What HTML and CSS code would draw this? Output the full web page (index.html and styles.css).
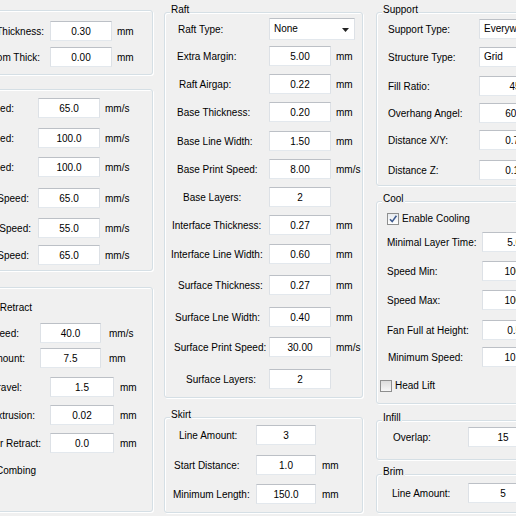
FILE: index.html
```html
<!DOCTYPE html>
<html lang="en">
<head>
    <meta charset="UTF-8">
    <meta name="viewport" content="width=device-width, initial-scale=1.0">
    <title>Expert Settings</title>
    <link rel="stylesheet" href="styles.css">
</head>
<body>
    <div class="dialog">
        <!-- Left column: quality, speed, retraction -->
        <div class="col col-left">
            <div class="group g-quality">
                <div class="rows">
                    <div class="row"><label class="lbl pr-6">Layer Thickness:</label><input class="field" value="0.30"><span class="unit">mm</span></div>
                    <div class="row"><label class="lbl pr-10">Bottom Thick:</label><input class="field" value="0.00"><span class="unit">mm</span></div>
                </div>
            </div>

            <div class="group g-speed">
                <div class="rows">
                    <div class="row"><label class="lbl pr-24">Print Speed:</label><input class="field" value="65.0"><span class="unit">mm/s</span></div>
                    <div class="row"><label class="lbl pr-24">Travel Speed:</label><input class="field" value="100.0"><span class="unit">mm/s</span></div>
                    <div class="row"><label class="lbl pr-24">Infill Speed:</label><input class="field" value="100.0"><span class="unit">mm/s</span></div>
                    <div class="row"><label class="lbl pr-9">Top/Bottom Speed:</label><input class="field" value="65.0"><span class="unit">mm/s</span></div>
                    <div class="row"><label class="lbl pr-7">Outer Shell Speed:</label><input class="field" value="55.0"><span class="unit">mm/s</span></div>
                    <div class="row"><label class="lbl pr-9">Inner Shell Speed:</label><input class="field" value="65.0"><span class="unit">mm/s</span></div>
                </div>
            </div>

            <div class="group g-retract">
                <div class="rows">
                    <div class="row check-row"><label class="lbl pr-8"><span class="check on"></span>Enable Retract</label></div>
                    <div class="row"><label class="lbl pr-21">Retract Speed:</label><input class="field" value="40.0"><span class="unit">mm/s</span></div>
                    <div class="row"><label class="lbl pr-15">Retract Amount:</label><input class="field" value="7.5"><span class="unit">mm</span></div>
                    <div class="row wide"><label class="lbl pr-28">Min Travel:</label><input class="field" value="1.5"><span class="unit">mm</span></div>
                    <div class="row wide"><label class="lbl pr-15">Min Extrusion:</label><input class="field" value="0.02"><span class="unit">mm</span></div>
                    <div class="row wide"><label class="lbl pr-9">Z Hop after Retract:</label><input class="field" value="0.0"><span class="unit">mm</span></div>
                    <div class="row wide check-row"><label class="lbl pr-14"><span class="check on"></span>Enable Combing</label></div>
                </div>
            </div>
        </div>

        <!-- Middle column: raft and skirt -->
        <div class="col col-mid">
            <div class="group g-raft">
                <span class="group-title">Raft</span>
                <div class="rows">
                    <div class="row combo-row"><label class="lbl pl-13">Raft Type:</label>
                        <div class="combo">None
                            <svg class="arrow" width="7" height="4" viewBox="0 0 7 4"><path d="M0 0H7L3.5 4Z" fill="#222"/></svg>
                        </div>
                    </div>
                    <div class="row"><label class="lbl pl-12">Extra Margin:</label><input class="field" value="5.00"><span class="unit">mm</span></div>
                    <div class="row"><label class="lbl pl-14">Raft Airgap:</label><input class="field" value="0.22"><span class="unit">mm</span></div>
                    <div class="row"><label class="lbl pl-12">Base Thickness:</label><input class="field" value="0.20"><span class="unit">mm</span></div>
                    <div class="row"><label class="lbl pl-12">Base Line Width:</label><input class="field" value="1.50"><span class="unit">mm</span></div>
                    <div class="row"><label class="lbl pl-12">Base Print Speed:</label><input class="field" value="8.00"><span class="unit">mm/s</span></div>
                    <div class="row"><label class="lbl pl-18">Base Layers:</label><input class="field" value="2"></div>
                    <div class="row"><label class="lbl pl-7">Interface Thickness:</label><input class="field" value="0.27"><span class="unit">mm</span></div>
                    <div class="row"><label class="lbl pl-6">Interface Line Width:</label><input class="field" value="0.60"><span class="unit">mm</span></div>
                    <div class="row"><label class="lbl pl-13">Surface Thickness:</label><input class="field" value="0.27"><span class="unit">mm</span></div>
                    <div class="row"><label class="lbl pl-10">Surface Lne Width:</label><input class="field" value="0.40"><span class="unit">mm</span></div>
                    <div class="row"><label class="lbl pl-9">Surface Print Speed:</label><input class="field" value="30.00"><span class="unit">mm/s</span></div>
                    <div class="row"><label class="lbl pl-21">Surface Layers:</label><input class="field" value="2"></div>
                </div>
            </div>

            <div class="group g-skirt">
                <span class="group-title">Skirt</span>
                <div class="rows">
                    <div class="row"><label class="lbl pl-14">Line Amount:</label><input class="field" value="3"></div>
                    <div class="row"><label class="lbl pl-9">Start Distance:</label><input class="field" value="1.0"><span class="unit">mm</span></div>
                    <div class="row"><label class="lbl pl-8">Minimum Length:</label><input class="field" value="150.0"><span class="unit">mm</span></div>
                </div>
            </div>
        </div>

        <!-- Right column: support, cool, infill, brim -->
        <div class="col col-right">
            <div class="group g-support">
                <span class="group-title">Support</span>
                <div class="rows">
                    <div class="row"><label class="lbl pl-11">Support Type:</label><div class="combo">Everywhere</div></div>
                    <div class="row"><label class="lbl pl-11">Structure Type:</label><div class="combo">Grid</div></div>
                    <div class="row"><label class="lbl pl-11">Fill Ratio:</label><input class="field" value="45"></div>
                    <div class="row"><label class="lbl pl-11">Overhang Angel:</label><input class="field" value="60.0"></div>
                    <div class="row"><label class="lbl pl-11">Distance X/Y:</label><input class="field" value="0.70"></div>
                    <div class="row"><label class="lbl pl-11">Distance Z:</label><input class="field" value="0.15"></div>
                </div>
            </div>

            <div class="group g-cool">
                <span class="group-title">Cool</span>
                <div class="rows">
                    <div class="row check-row"><label class="lbl pl-10"><span class="check on"><svg width="10" height="10" viewBox="0 0 10 10"><path d="M2 5.2L4.2 7.6L8.4 1.8" fill="none" stroke="#3f5b8f" stroke-width="1.6"/></svg></span>Enable Cooling</label></div>
                    <div class="row"><label class="lbl pl-10">Minimal Layer Time:</label><input class="field" value="5.00"></div>
                    <div class="row"><label class="lbl pl-10">Speed Min:</label><input class="field" value="100.0"></div>
                    <div class="row"><label class="lbl pl-10">Speed Max:</label><input class="field" value="100.0"></div>
                    <div class="row"><label class="lbl pl-10">Fan Full at Height:</label><input class="field" value="0.50"></div>
                    <div class="row"><label class="lbl pl-11">Minimum Speed:</label><input class="field" value="10.00"></div>
                    <div class="row check-row"><label class="lbl pl-3"><span class="check"></span>Head Lift</label></div>
                </div>
            </div>

            <div class="group g-infill">
                <span class="group-title">Infill</span>
                <div class="rows">
                    <div class="row"><label class="lbl pl-16">Overlap:</label><input class="field" value="15"></div>
                </div>
            </div>

            <div class="group g-brim">
                <span class="group-title">Brim</span>
                <div class="rows">
                    <div class="row"><label class="lbl pl-15">Line Amount:</label><input class="field" value="5"></div>
                </div>
            </div>
        </div>
    </div>
</body>
</html>
```

FILE: styles.css
```css
* {
    margin: 0;
    padding: 0;
    box-sizing: border-box;
}

html,
body {
    width: 516px;
    height: 516px;
    overflow: hidden;
}

body {
    font-family: 'Liberation Sans', Arial, sans-serif;
    font-size: 10px;
    color: #000;
    background-color: #f0f0f0;
}

.dialog {
    display: flex;
    align-items: flex-start;
    margin-left: -28px;
}

.col {
    display: flex;
    flex-direction: column;
    flex: none;
}

.col-left {
    width: 181px;
}

.col-mid {
    width: 199px;
    margin-left: 11px;
}

.col-right {
    width: 170px;
    margin-left: 13px;
}

/* Group boxes */
.group {
    position: relative;
    border: 1px solid #d5dfe5;
    border-radius: 3px;
    box-shadow: inset 1px 1px 0 #fff, 1px 1px 0 #fff;
}

.group-title {
    position: absolute;
    top: -10px;
    left: 5px;
    padding: 0 1px;
    line-height: 13px;
    background-color: #f0f0f0;
}

.rows {
    display: grid;
    align-items: start;
}

.row {
    display: grid;
    grid-template-columns: var(--lab) var(--inp) auto;
    align-items: center;
    height: 20px;
}

.lbl {
    display: flex;
    align-items: center;
    white-space: nowrap;
}

.col-left .lbl {
    justify-content: flex-end;
}

.field {
    width: 100%;
    height: 20px;
    border: 1px solid;
    border-color: #bcc0c6 #dde1e6 #e3e8ed #dde1e6;
    background-color: #fff;
    font: inherit;
    color: #000;
    text-align: center;
    outline: none;
}

.unit {
    padding-left: var(--unit, 5px);
    white-space: nowrap;
}

.combo {
    position: relative;
    width: 80px;
    height: 20px;
    padding-left: 4px;
    border: 1px solid;
    border-color: #bcc0c6 #dde1e6 #e3e8ed #dde1e6;
    background-color: #fff;
    line-height: 18px;
    white-space: nowrap;
    overflow: hidden;
}

.combo .arrow {
    position: absolute;
    right: 5px;
    top: 9px;
}

.combo-row {
    height: 22px;
}

.combo-row .combo {
    grid-column: span 2;
    width: 86px;
    height: 22px;
    line-height: 20px;
}

.check-row {
    height: 13px;
}

.check-row .lbl {
    grid-column: 1 / -1;
}

/* checkbox rows on the left keep to the label column, so only their tail shows */
.col-left .check-row .lbl {
    grid-column: 1;
}

.check {
    display: inline-flex;
    align-items: center;
    justify-content: center;
    flex: none;
    width: 12px;
    height: 12px;
    margin-right: 3px;
    border: 1px solid #8e8f8f;
    background: linear-gradient(#dcdcdc, #f7f7f7);
}

.check.on {
    background: linear-gradient(#e9ecf0, #ffffff);
}

/* Left column groups */
.g-quality {
    margin-top: 10px;
    padding: 10px 0 7px;
    --lab: 77px;
    --inp: 62px;
}

.g-quality .rows {
    grid-template-rows: 26px 20px;
}

.g-speed {
    margin-top: 14px;
    padding: 8px 0 5px;
    --lab: 65px;
    --inp: 62px;
}

.g-speed .rows {
    grid-template-rows: 30px 29px 31px 30px 27px 20px;
}

.g-retract {
    margin-top: 16px;
    padding: 13px 0 34px;
    --lab: 67px;
    --inp: 61px;
    --unit: 8px;
}

.g-retract .rows {
    grid-template-rows: 22px 25px 29px 28px 28px 31px 13px;
}

.g-retract .wide {
    --lab: 77px;
    --inp: 64px;
    --unit: 6px;
}

/* Middle column groups */
.g-raft {
    margin-top: 12px;
    padding: 5px 0 8px;
    --lab: 104px;
    --inp: 62px;
}

.g-raft .rows {
    grid-template-rows: 28px 28px 28px 29px 28px 28px 28px 29px 31px 32px 30px 32px 20px;
}

.g-skirt {
    margin-top: 19px;
    padding: 7px 0 8px;
    --lab: 91px;
    --inp: 60px;
    --unit: 6px;
}

.g-skirt .rows {
    grid-template-rows: 30px 29px 20px;
}

/* Right column groups */
.g-support {
    margin-top: 12px;
    padding: 6px 0 5px;
    --lab: 102px;
    --inp: 72px;
}

.g-support .rows {
    grid-template-rows: 28px 29px 27px 27px 30px 20px;
}

.g-cool {
    margin-top: 15px;
    padding: 10px 0 11px;
    --lab: 105px;
    --inp: 70px;
}

.g-cool .rows {
    grid-template-rows: 20px 29px 29px 30px 27px 32px 13px;
}

.g-infill {
    margin-top: 16px;
    padding: 6px 0 12px;
    --lab: 91px;
    --inp: 70px;
}

.g-brim {
    margin-top: 14px;
    padding: 8px 0 9px;
    --lab: 91px;
    --inp: 70px;
}

/* Label offsets */
.pl-3 { padding-left: 3px; }
.pl-6 { padding-left: 6px; }
.pl-7 { padding-left: 7px; }
.pl-8 { padding-left: 8px; }
.pl-9 { padding-left: 9px; }
.pl-10 { padding-left: 10px; }
.pl-11 { padding-left: 11px; }
.pl-12 { padding-left: 12px; }
.pl-13 { padding-left: 13px; }
.pl-14 { padding-left: 14px; }
.pl-15 { padding-left: 15px; }
.pl-16 { padding-left: 16px; }
.pl-18 { padding-left: 18px; }
.pl-21 { padding-left: 21px; }

.pr-6 { padding-right: 6px; }
.pr-7 { padding-right: 7px; }
.pr-8 { padding-right: 8px; }
.pr-9 { padding-right: 9px; }
.pr-10 { padding-right: 10px; }
.pr-14 { padding-right: 14px; }
.pr-15 { padding-right: 15px; }
.pr-21 { padding-right: 21px; }
.pr-24 { padding-right: 24px; }
.pr-28 { padding-right: 28px; }
```
